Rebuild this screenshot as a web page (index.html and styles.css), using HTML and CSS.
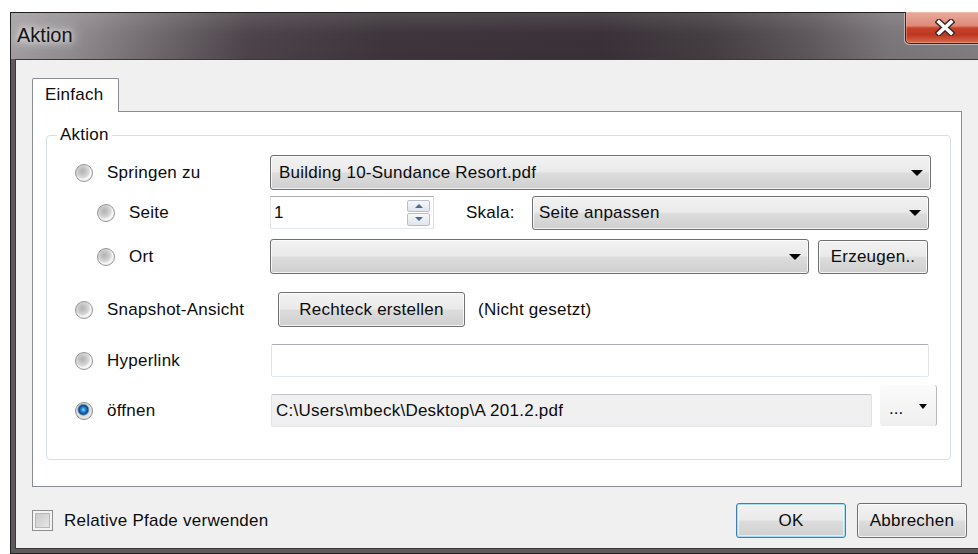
FILE: index.html
```html
<!DOCTYPE html>
<html lang="de">
<head>
<meta charset="utf-8">
<title>Aktion</title>
<link rel="stylesheet" href="styles.css">
</head>
<body>
<div class="window">
  <div class="titlebar">
    <span class="title">Aktion</span>
    <div class="close" aria-label="Schließen">
      <svg width="20" height="17" viewBox="0 0 20 17">
        <path d="M4 3 L16 14 M16 3 L4 14" stroke="#3a2a28" stroke-width="6.4" stroke-linecap="square" fill="none"/>
        <path d="M4 3 L16 14 M16 3 L4 14" stroke="#ffffff" stroke-width="3.6" stroke-linecap="square" fill="none"/>
      </svg>
    </div>
  </div>
  <div class="frame">
    <div class="client">
      <div class="tabs">
        <div class="tab active">Einfach</div>
      </div>
      <div class="tabpanel">
        <fieldset class="group">
          <legend>Aktion</legend>

          <div class="row r1">
            <label class="opt"><span class="radio"></span>Springen zu</label>
            <div class="combo w-file"><span>Building 10-Sundance Resort.pdf</span><i class="arrow"></i></div>
          </div>

          <div class="row r2">
            <label class="opt sub"><span class="radio"></span>Seite</label>
            <div class="spin">
              <span>1</span>
              <div class="spin-btns"><span class="up"><i></i></span><span class="down"><i></i></span></div>
            </div>
            <span class="skala">Skala:</span>
            <div class="combo w-scale"><span>Seite anpassen</span><i class="arrow"></i></div>
          </div>

          <div class="row r3">
            <label class="opt sub"><span class="radio"></span>Ort</label>
            <div class="combo w-place"><span></span><i class="arrow"></i></div>
            <div class="btn w-create">Erzeugen..</div>
          </div>

          <div class="row r4">
            <label class="opt"><span class="radio"></span>Snapshot-Ansicht</label>
            <div class="btn w-rect">Rechteck erstellen</div>
            <span class="note">(Nicht gesetzt)</span>
          </div>

          <div class="row r5">
            <label class="opt"><span class="radio"></span>Hyperlink</label>
            <div class="field w-link"></div>
          </div>

          <div class="row r6">
            <label class="opt"><span class="radio checked"></span>öffnen</label>
            <div class="field disabled w-path">C:\Users\mbeck\Desktop\A 201.2.pdf</div>
            <div class="split"><span class="dots">...</span><i class="arrow small"></i></div>
          </div>
        </fieldset>
      </div>

      <div class="footer">
        <label class="check"><span class="box"></span>Relative Pfade verwenden</label>
        <div class="btn ok">OK</div>
        <div class="btn cancel">Abbrechen</div>
      </div>
    </div>
  </div>
</div>
</body>
</html>
```

FILE: styles.css
```css
* { box-sizing: border-box; }

html, body { margin: 0; padding: 0; }

body {
  width: 978px;
  height: 554px;
  overflow: hidden;
  background: #ffffff;
  font-family: "Liberation Sans", Arial, sans-serif;
  font-size: 17px;
  line-height: 20px;
  letter-spacing: 0.25px;
  color: #0c0c0c;
}

/* ---- window frame ---- */
.window {
  margin: 12px 0 0 10px;
  width: 988px;
  border: 1px solid #1f1f1f;
  background: #5d595d;
}

.titlebar {
  height: 46px;
  display: flex;
  align-items: flex-start;
  justify-content: space-between;
  background:
    linear-gradient(180deg, rgba(255,255,255,0.10), rgba(255,255,255,0) 45%, rgba(0,0,0,0.04)),
    linear-gradient(90deg, #a5a1a4 0%, #948f93 6%, #6f686d 15%, #4d454b 24%, #3e363c 38%, #3a3238 60%, #453e43 71%, #5f595d 81%, #7c777b 89%, #868185 100%);
}

.title {
  margin: 12px 0 0 6px;
  font-size: 20px;
  line-height: 20px;
  letter-spacing: 0;
  color: #151515;
  text-shadow: 0 0 6px rgba(255,255,255,0.85), 0 0 12px rgba(255,255,255,0.7), 0 0 18px rgba(255,255,255,0.5);
}

.close {
  margin: -1px 12px 0 0;
  width: 80px;
  height: 32px;
  display: flex;
  align-items: center;
  justify-content: center;
  border: 1px solid #4a1c15;
  border-top: 0;
  border-radius: 0 0 5px 5px;
  background: linear-gradient(180deg, #e8ab9d 0%, #dd8b77 44%, #c6402a 52%, #bd3822 74%, #d96b4d 100%);
  box-shadow: -1px 1px 0 rgba(255,255,255,0.45), inset 0 0 0 1px rgba(255,210,200,0.35);
}

.frame { padding: 0 4px 4px; }

.client {
  border: 1px solid #3a3a3a;
  background: #f0f0f0;
  padding: 18px 0 10px 16px;
}

/* ---- tabs ---- */
.tabs { display: flex; height: 33px; }

.tab {
  position: relative;
  z-index: 1;
  width: 87px;
  height: 34px;
  border: 1px solid #898c95;
  border-bottom: 0;
  border-radius: 2px 2px 0 0;
  background: #ffffff;
  padding-left: 12px;
  line-height: 32px;
}

.tabpanel {
  width: 930px;
  height: 376px;
  border: 1px solid #898c95;
  background: #ffffff;
  padding: 13px 0 0 13px;
}

/* ---- group box ---- */
.group {
  margin: 0;
  min-width: 0;
  width: 905px;
  border: 1px solid #d5dfe5;
  border-radius: 4px;
  padding: 10px 18px 31px 10px;
}

.group legend {
  padding: 0 3px;
  line-height: 20px;
}

.row {
  display: flex;
  align-items: center;
  height: 35px;
  padding-left: 18px;
}
.r2 { margin-top: 5px; }
.r3 { margin-top: 9px; }
.r4 { margin-top: 18px; }
.r5 { margin-top: 16px; }
.r6 { margin-top: 15px; }

.opt {
  flex: none;
  width: 195px;
  display: flex;
  align-items: center;
}
.opt.sub { padding-left: 22px; }

/* radio buttons */
.radio {
  flex: none;
  width: 18px;
  height: 18px;
  margin-right: 14px;
  border-radius: 50%;
  border: 1px solid #959595;
  background: radial-gradient(circle at 40% 38%, #b3b3b3 0, #c6c6c6 28%, #dcdcdc 50%, #f6f6f6 58%, #e9e9e9 100%);
}
.radio.checked {
  border-color: #8a8a8a;
  background: radial-gradient(circle at 46% 42%, #8fdcff 0, #3a9ee0 1.6px, #1769b6 3.2px, #0c4787 4.6px, #7b93ab 5.4px, #dedede 6.3px, #f4f4f4 100%);
}

/* combo boxes and buttons */
.combo, .btn {
  flex: none;
  display: flex;
  align-items: center;
  border: 1px solid #707070;
  border-radius: 3px;
  background: linear-gradient(180deg, #f2f2f2 0%, #eaeaea 47%, #dcdcdc 53%, #cfcfcf 100%);
  box-shadow: inset 0 0 0 1px rgba(255,255,255,0.75);
}

.combo {
  height: 35px;
  justify-content: space-between;
  padding: 0 7px 0 8px;
}

.arrow {
  width: 0;
  height: 0;
  border-left: 6px solid transparent;
  border-right: 6px solid transparent;
  border-top: 6px solid #000000;
}
.arrow.small {
  border-left-width: 4px;
  border-right-width: 4px;
  border-top-width: 5px;
}

.w-file { width: 661px; }
.w-scale { width: 397px; height: 34px; padding-left: 6px; }
.w-place { width: 539px; }

.btn {
  justify-content: center;
  height: 34px;
}
.w-create { width: 110px; margin-left: 9px; }
.w-rect { width: 187px; height: 35px; margin-left: 8px; }

.note { margin-left: 13px; }

/* spin box */
.spin {
  flex: none;
  width: 164px;
  height: 33px;
  display: flex;
  align-items: center;
  justify-content: space-between;
  padding: 0 3px 0 3px;
  background: #ffffff;
  border: 1px solid;
  border-color: #abadb3 #dbdfe6 #e3e9ef #e2e3ea;
}

.spin-btns {
  width: 23px;
  height: 26px;
  display: flex;
  flex-direction: column;
  gap: 1px;
}
.spin-btns span {
  flex: 1;
  display: flex;
  align-items: center;
  justify-content: center;
  border: 1px solid #b6c0cc;
  border-radius: 2px;
  background: linear-gradient(180deg, #f6f8fa, #dfe5ec);
}
.spin-btns .up i {
  border-left: 4px solid transparent;
  border-right: 4px solid transparent;
  border-bottom: 4px solid #4e6891;
}
.spin-btns .down i {
  border-left: 4px solid transparent;
  border-right: 4px solid transparent;
  border-top: 4px solid #4e6891;
}

.skala {
  flex: none;
  width: 66px;
  margin-left: 32px;
}

/* text fields */
.field {
  flex: none;
  height: 33px;
  display: flex;
  align-items: center;
  padding: 0 4px;
  background: #ffffff;
  border: 1px solid;
  border-color: #abadb3 #e2e3ea #e3e9ef #e2e3ea;
  border-radius: 2px;
  margin-left: 1px;
}
.field.disabled {
  background: #f0f0f0;
  border-color: #c2c5ca #dfe2e6 #e3e7eb #dfe2e6;
}
.w-link { width: 658px; }
.w-path { width: 601px; }

/* split button next to the path */
.split {
  flex: none;
  width: 57px;
  height: 41px;
  margin: 0 0 10px 8px;
  display: flex;
  align-items: center;
  justify-content: space-between;
  padding: 6px 9px 0 9px;
  border-right: 1px solid #b9b9b9;
  border-radius: 3px;
  background: linear-gradient(180deg, #fbfbfb, #efefef);
}
.split .dots { line-height: 14px; letter-spacing: 0; }
.split .arrow { margin-bottom: 4px; }

/* footer */
.footer {
  width: 935px;
  height: 35px;
  margin-top: 16px;
  display: flex;
  align-items: center;
}

.check {
  flex: 1;
  display: flex;
  align-items: center;
}
.check .box {
  flex: none;
  width: 21px;
  height: 21px;
  margin-right: 11px;
  border: 1px solid #8e8f8f;
  background: linear-gradient(135deg, #c4c4c4, #ececec);
  box-shadow: inset 0 0 0 2px #f3f3f3, inset 0 0 0 3px #b8b8b8;
}

.ok {
  width: 110px;
  height: 35px;
  border-color: #3c7fb1;
  box-shadow: inset 0 0 0 1px #a7dcf5, inset 0 0 0 2px rgba(255,255,255,0.5);
}
.cancel {
  width: 110px;
  height: 35px;
  margin-left: 11px;
}
```
